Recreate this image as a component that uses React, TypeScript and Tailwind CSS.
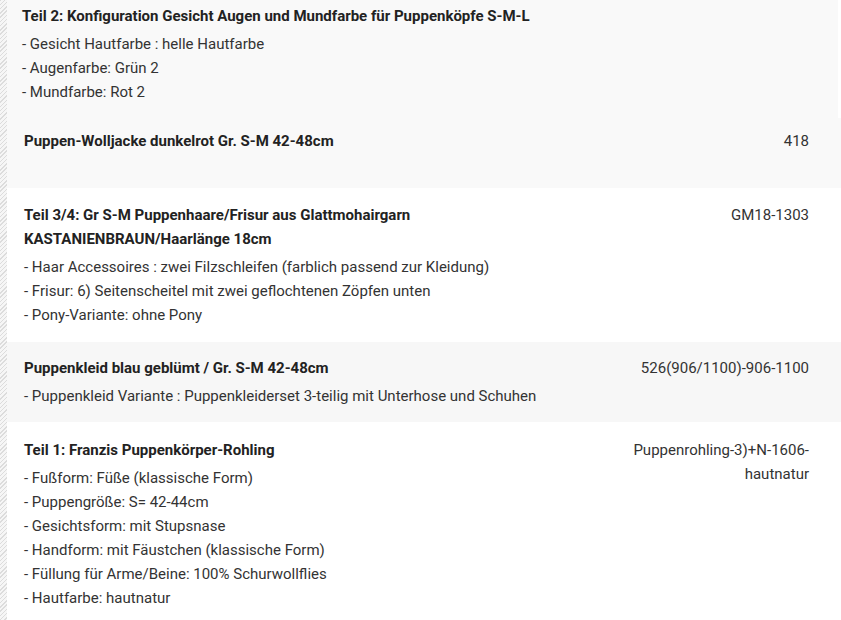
import React from "react";

type Row = {
  title: string[];
  lines: string[];
  code?: string[];
  bg: string;
  cls: string;
};

const rows: Row[] = [
  {
    title: ["Teil 2: Konfiguration Gesicht Augen und Mundfarbe für Puppenköpfe S-M-L"],
    lines: ["- Gesicht Hautfarbe : helle Hautfarbe", "- Augenfarbe: Grün 2", "- Mundfarbe: Rot 2"],
    bg: "bg-[#f9f9f9]",
    cls: "pt-[4px] pb-[14px] pl-[15px] mr-[3px] h-[118px]",
  },
  {
    title: ["Puppen-Wolljacke dunkelrot Gr. S-M 42-48cm"],
    lines: [],
    code: ["418"],
    bg: "bg-[#f9f9f9]",
    cls: "pt-[11px] pl-[17px] h-[70px]",
  },
  {
    title: ["Teil 3/4: Gr S-M Puppenhaare/Frisur aus Glattmohairgarn", "KASTANIENBRAUN/Haarlänge 18cm"],
    lines: [
      "- Haar Accessoires : zwei Filzschleifen (farblich passend zur Kleidung)",
      "- Frisur: 6) Seitenscheitel mit zwei geflochtenen Zöpfen unten",
      "- Pony-Variante: ohne Pony",
    ],
    code: ["GM18-1303"],
    bg: "bg-white",
    cls: "pt-[15px] pl-[17px] h-[154px]",
  },
  {
    title: ["Puppenkleid blau geblümt / Gr. S-M 42-48cm"],
    lines: ["- Puppenkleid Variante : Puppenkleiderset 3-teilig mit Unterhose und Schuhen"],
    code: ["526(906/1100)-906-1100"],
    bg: "bg-[#f7f7f7]",
    cls: "pt-[14px] pl-[17px] h-[80px]",
  },
  {
    title: ["Teil 1: Franzis Puppenkörper-Rohling"],
    lines: [
      "- Fußform: Füße (klassische Form)",
      "- Puppengröße: S= 42-44cm",
      "- Gesichtsform: mit Stupsnase",
      "- Handform: mit Fäustchen (klassische Form)",
      "- Füllung für Arme/Beine: 100% Schurwollflies",
      "- Hautfarbe: hautnatur",
    ],
    code: ["Puppenrohling-3)+N-1606-", "hautnatur"],
    bg: "bg-white",
    cls: "pt-[16px] pl-[17px] h-[200px]",
  },
];

export default function App() {
  return (
    <div
      className="flex w-[841px] h-[620px] overflow-hidden bg-white text-[15px] leading-[24px] text-[#333]"
      style={{ fontFamily: "Roboto, 'Liberation Sans', Arial, sans-serif" }}
    >
      <div className="w-[7px] shrink-0 bg-[repeating-linear-gradient(135deg,#dcdcdc_0px,#dcdcdc_1px,#f6f6f6_1px,#f6f6f6_3px)]" />
      <div className="flex-1 flex flex-col">
        {rows.map((r, i) => (
          <div key={i} className={`${r.bg} ${r.cls} pr-[32px] flex shrink-0`}>
            <div className="flex-1 min-w-0">
              {r.title.map((t, j) => (
                <div key={j} className="font-bold text-[#222]">
                  {t}
                </div>
              ))}
              <div className="mt-[4px]">
                {r.lines.map((l, j) => (
                  <div key={j}>{l}</div>
                ))}
              </div>
            </div>
            {r.code && (
              <div className="w-[220px] text-right shrink-0">
                {r.code.map((c, j) => (
                  <div key={j}>{c}</div>
                ))}
              </div>
            )}
          </div>
        ))}
      </div>
    </div>
  );
}
